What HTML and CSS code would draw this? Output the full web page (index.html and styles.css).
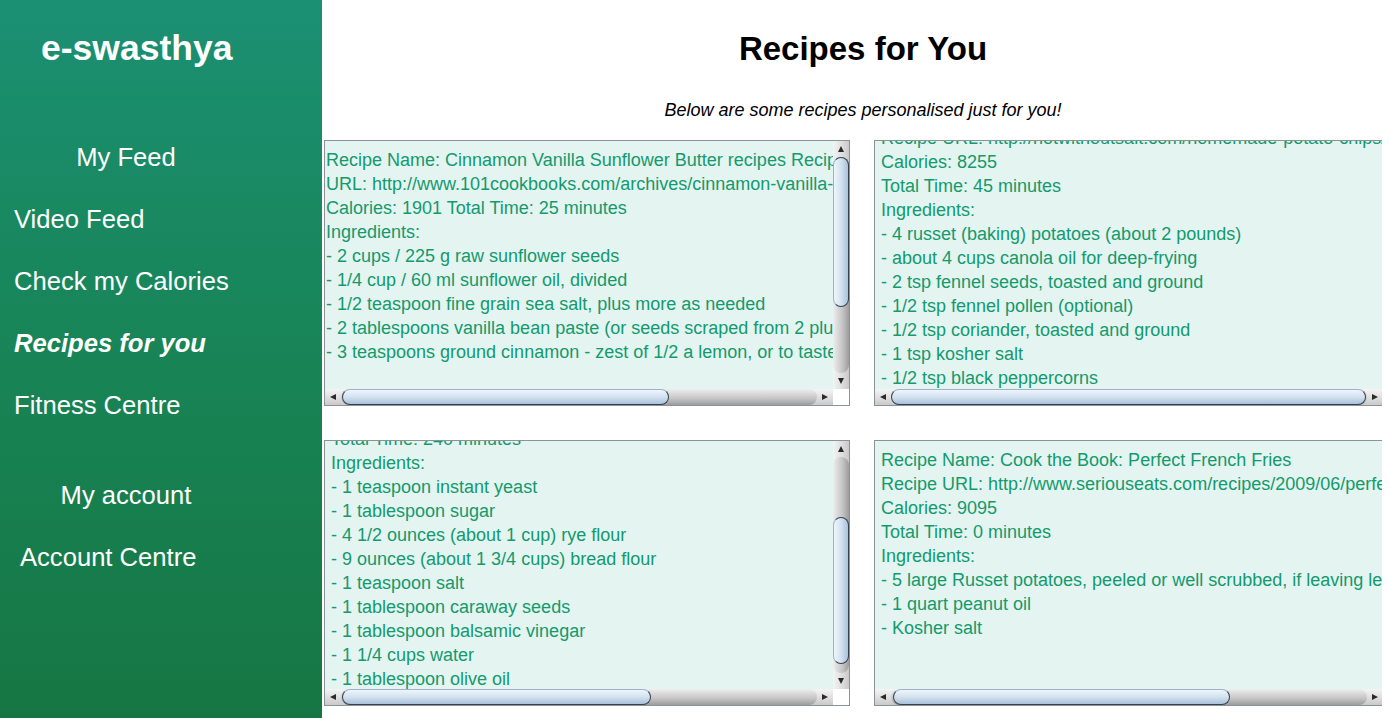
FILE: index.html
```html
<!DOCTYPE html>
<html lang="en">
<head>
<meta charset="utf-8">
<title>e-swasthya – Recipes for You</title>
<link rel="stylesheet" href="styles.css">
</head>
<body>
<div class="page">
  <aside class="sidebar">
    <div class="brand">e-swasthya</div>
    <nav class="nav">
      <a class="nav-item nav-head">My Feed</a>
      <a class="nav-item">Video Feed</a>
      <a class="nav-item">Check my Calories</a>
      <a class="nav-item active">Recipes for you</a>
      <a class="nav-item">Fitness Centre</a>
      <a class="nav-item nav-head section">My account</a>
      <a class="nav-item acct">Account Centre</a>
    </nav>
  </aside>
  <main class="main">
    <div class="main-inner">
      <h1 class="title">Recipes for You</h1>
      <p class="subtitle">Below are some recipes personalised just for you!</p>
      <div class="grid">

        <div class="box">
          <div class="content">
            <div class="lines shift-x">Recipe Name: Cinnamon Vanilla Sunflower Butter recipes Recipe
URL: http://www.101cookbooks.com/archives/cinnamon-vanilla-sunflower-butter-recipe.html
Calories: 1901 Total Time: 25 minutes
Ingredients:
- 2 cups / 225 g raw sunflower seeds
- 1/4 cup / 60 ml sunflower oil, divided
- 1/2 teaspoon fine grain sea salt, plus more as needed
- 2 tablespoons vanilla bean paste (or seeds scraped from 2 plump vanilla beans)
- 3 teaspoons ground cinnamon - zest of 1/2 a lemon, or to taste</div>
          </div>
          <div class="vbar">
            <div class="arrow"><span class="tri up"></span></div>
            <div class="vrail"><div class="vthumb" style="margin-top:0px;height:150px"></div></div>
            <div class="arrow"><span class="tri down"></span></div>
          </div>
          <div class="hbar">
            <div class="arrow"><span class="tri left"></span></div>
            <div class="hrail"><div class="hthumb" style="margin-left:1px;width:327px"></div></div>
            <div class="arrow"><span class="tri right"></span></div>
          </div>
          <div class="corner"></div>
        </div>

        <div class="box">
          <div class="content">
            <div class="lines scroll-2">Recipe URL: http://notwithoutsalt.com/homemade-potato-chips/
Calories: 8255
Total Time: 45 minutes
Ingredients:
- 4 russet (baking) potatoes (about 2 pounds)
- about 4 cups canola oil for deep-frying
- 2 tsp fennel seeds, toasted and ground
- 1/2 tsp fennel pollen (optional)
- 1/2 tsp coriander, toasted and ground
- 1 tsp kosher salt
- 1/2 tsp black peppercorns</div>
          </div>
          <div class="vbar">
            <div class="arrow"><span class="tri up"></span></div>
            <div class="vrail"><div class="vthumb" style="margin-top:40px;height:140px"></div></div>
            <div class="arrow"><span class="tri down"></span></div>
          </div>
          <div class="hbar">
            <div class="arrow"><span class="tri left"></span></div>
            <div class="hrail"><div class="hthumb" style="margin-left:0px;width:475px"></div></div>
            <div class="arrow"><span class="tri right"></span></div>
          </div>
          <div class="corner"></div>
        </div>

        <div class="box">
          <div class="content">
            <div class="lines scroll-3">Total Time: 240 minutes
Ingredients:
- 1 teaspoon instant yeast
- 1 tablespoon sugar
- 4 1/2 ounces (about 1 cup) rye flour
- 9 ounces (about 1 3/4 cups) bread flour
- 1 teaspoon salt
- 1 tablespoon caraway seeds
- 1 tablespoon balsamic vinegar
- 1 1/4 cups water
- 1 tablespoon olive oil</div>
          </div>
          <div class="vbar">
            <div class="arrow"><span class="tri up"></span></div>
            <div class="vrail"><div class="vthumb" style="margin-top:60px;height:147px"></div></div>
            <div class="arrow"><span class="tri down"></span></div>
          </div>
          <div class="hbar">
            <div class="arrow"><span class="tri left"></span></div>
            <div class="hrail"><div class="hthumb" style="margin-left:1px;width:309px"></div></div>
            <div class="arrow"><span class="tri right"></span></div>
          </div>
          <div class="corner"></div>
        </div>

        <div class="box">
          <div class="content">
            <div class="lines">Recipe Name: Cook the Book: Perfect French Fries
Recipe URL: http://www.seriouseats.com/recipes/2009/06/perfect-french-fries-recipe.html
Calories: 9095
Total Time: 0 minutes
Ingredients:
- 5 large Russet potatoes, peeled or well scrubbed, if leaving left skin on
- 1 quart peanut oil
- Kosher salt</div>
          </div>
          <div class="vbar">
            <div class="arrow"><span class="tri up"></span></div>
            <div class="vrail"><div class="vthumb" style="margin-top:0px;height:200px"></div></div>
            <div class="arrow"><span class="tri down"></span></div>
          </div>
          <div class="hbar">
            <div class="arrow"><span class="tri left"></span></div>
            <div class="hrail"><div class="hthumb" style="margin-left:2px;width:337px"></div></div>
            <div class="arrow"><span class="tri right"></span></div>
          </div>
          <div class="corner"></div>
        </div>

      </div>
    </div>
  </main>
</div>
</body>
</html>
```

FILE: styles.css
```css
* { box-sizing: border-box; }

html, body {
  margin: 0;
  padding: 0;
  background: #ffffff;
  font-family: "Liberation Sans", Arial, sans-serif;
}

.page {
  display: flex;
  width: 1389px;
  height: 718px;
  overflow: hidden;
}

/* ---------- Sidebar ---------- */
.sidebar {
  flex: none;
  width: 322px;
  height: 718px;
  background: linear-gradient(180deg, #1b9073 0%, #188456 50%, #167643 100%);
  color: #ffffff;
  display: flex;
  flex-direction: column;
}

.brand {
  margin-top: 27px;
  padding-left: 41px;
  font-size: 35.5px;
  font-weight: bold;
  line-height: 42px;
}

.nav {
  margin-top: 57px;
  display: flex;
  flex-direction: column;
}

.nav-item {
  display: block;
  height: 62px;
  line-height: 62px;
  font-size: 25.6px;
  color: #ffffff;
  padding-left: 14px;
  white-space: nowrap;
}

.nav-head {
  padding-left: 0;
  width: 252px;
  text-align: center;
}

.nav-item.section {
  margin-top: 28px;
}

.nav-item.acct {
  padding-left: 20px;
}

.nav-item.active {
  font-weight: bold;
  font-style: italic;
}

/* ---------- Main ---------- */
.main {
  flex: none;
  width: 1060px;
  height: 718px;
  overflow: hidden;
}

.main-inner {
  width: 1082px;
  padding: 0 2px;
}

.title {
  margin: 30px 0 0;
  font-size: 33px;
  line-height: 38px;
  font-weight: bold;
  text-align: center;
  color: #000000;
}

.subtitle {
  margin: 31px 0 0;
  font-size: 18px;
  line-height: 22px;
  font-style: italic;
  text-align: center;
  color: #000000;
}

.grid {
  margin-top: 19px;
  display: grid;
  grid-template-columns: 526px 526px;
  grid-auto-rows: 266px;
  column-gap: 24px;
  row-gap: 34px;
}

.box {
  border: 1px solid #8d9297;
  background: #e4f4f0;
  display: grid;
  grid-template-columns: 508px 16px;
  grid-template-rows: 248px 16px;
}

.content {
  overflow: hidden;
  padding: 7px 0 0 6px;
}

.lines {
  white-space: pre;
  font-size: 18px;
  line-height: 24px;
  color: #139a6e;
}

.shift-x { margin-left: -5px; }
.scroll-2 { margin-top: -22px; }
.scroll-3 { margin-top: -21px; }

/* ---------- Scrollbars ---------- */
.vbar {
  display: flex;
  flex-direction: column;
  background: linear-gradient(90deg, #f4f4f4 0%, #dcdcdc 60%, #c9c9c9 100%);
}

.hbar {
  display: flex;
  background: linear-gradient(180deg, #f4f4f4 0%, #dcdcdc 60%, #c9c9c9 100%);
}

.arrow {
  flex: none;
  width: 16px;
  height: 16px;
  display: flex;
  align-items: center;
  justify-content: center;
}

.tri {
  width: 0;
  height: 0;
  border-style: solid;
}
.tri.up    { border-width: 0 3.5px 6px 3.5px; border-color: transparent transparent #2a2a2a transparent; }
.tri.down  { border-width: 6px 3.5px 0 3.5px; border-color: #2a2a2a transparent transparent transparent; }
.tri.left  { border-width: 3.5px 6px 3.5px 0; border-color: transparent #2a2a2a transparent transparent; }
.tri.right { border-width: 3.5px 0 3.5px 6px; border-color: transparent transparent transparent #2a2a2a; }

.vrail {
  flex: 1;
  border-radius: 8px;
  background: linear-gradient(90deg, #eeeeee 0%, #c4c4c4 60%, #9c9c9c 100%);
  display: flex;
  flex-direction: column;
}

.hrail {
  flex: 1;
  border-radius: 8px;
  background: linear-gradient(180deg, #eeeeee 0%, #c4c4c4 60%, #9c9c9c 100%);
  display: flex;
}

.vthumb {
  flex: none;
  width: 16px;
  border: 1px solid #33414f;
  border-left-color: #9fb2c5;
  border-radius: 8px;
  background: linear-gradient(90deg, #eef5fb 0%, #d3e2f0 50%, #a9c1da 100%);
}

.hthumb {
  flex: none;
  height: 16px;
  border: 1px solid #33414f;
  border-top-color: #9fb2c5;
  border-radius: 8px;
  background: linear-gradient(180deg, #eef5fb 0%, #d3e2f0 50%, #a9c1da 100%);
}

.corner {
  background: #ffffff;
}
```
